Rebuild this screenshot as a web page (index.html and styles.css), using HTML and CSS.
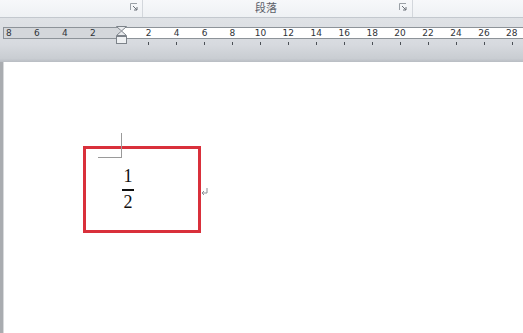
FILE: index.html
```html
<!DOCTYPE html>
<html lang="zh">
<head>
<meta charset="utf-8">
<link rel="stylesheet" href="styles.css">
</head>
<body>
<div class="app">
  <div class="ribbon">
    <div class="group g1">
      <span class="launcher"><svg width="8" height="8" viewBox="0 0 8 8"><path d="M0.5 7V0.5H7" fill="none" stroke="#9aa0a6"/><path d="M3 3L7 7M7 4V7H4" fill="none" stroke="#6b7178"/></svg></span>
    </div>
    <div class="group g2">
      <span class="glabel">段落</span>
      <span class="launcher"><svg width="8" height="8" viewBox="0 0 8 8"><path d="M0.5 7V0.5H7" fill="none" stroke="#9aa0a6"/><path d="M3 3L7 7M7 4V7H4" fill="none" stroke="#6b7178"/></svg></span>
    </div>
    <div class="group g3"></div>
  </div>
  <div class="rulerband">
    <div class="ruler">
      <div class="margin-l"></div>
      <div class="nums">
        <span>8</span><span>6</span><span>4</span><span>2</span><span></span>
        <span>2</span><span>4</span><span>6</span><span>8</span><span>10</span>
        <span>12</span><span>14</span><span>16</span><span>18</span><span>20</span>
        <span>22</span><span>24</span><span>26</span><span>28</span>
      </div>
    </div>
    <div class="ticks">
      <i></i><i></i><i></i><i></i><i></i><i></i><i></i><i></i><i></i><i></i><i></i><i></i><i></i><i></i>
    </div>
    <div class="indent">
      <svg width="11" height="19" viewBox="0 0 11 19"><path d="M0.5 0.5H10.5L5.5 5L10.5 9.5H0.5L5.5 5Z" fill="#e9ebee" stroke="#7d838a"/><rect x="0.5" y="10.5" width="10" height="7" fill="#eef0f2" stroke="#7d838a"/></svg>
    </div>
  </div>
  <div class="doc">
    <div class="frame-wrap">
      <div class="corner"></div>
      <div class="frame">
        <div class="frac">
          <span class="num">1</span>
          <span class="bar"></span>
          <span class="den">2</span>
        </div>
      </div>
      <span class="pilcrow"><svg width="7" height="8" viewBox="0 0 7 8"><path d="M6 0V5H1M3 3L1 5L3 7" fill="none" stroke="#8a8f95"/></svg></span>
    </div>
  </div>
</div>
</body>
</html>
```
FILE: styles.css
```css
* { box-sizing: border-box; }
html, body { margin: 0; padding: 0; }
body { width: 523px; height: 333px; overflow: hidden; background: #fff; font-family: "Liberation Sans", Arial, sans-serif; }
.app { width: 523px; height: 333px; display: flex; flex-direction: column; }

.ribbon { height: 18px; display: flex; background: linear-gradient(#f7f8fa, #eef1f4); border-bottom: 1px solid #c3c8ce; }
.group { position: relative; height: 17px; display: flex; align-items: center; border-right: 1px solid #d3d7dc; }
.g1 { width: 143px; justify-content: flex-end; padding-right: 4px; }
.g2 { width: 270px; justify-content: flex-end; padding-right: 5px; }
.g3 { flex: 1; border-right: none; }
.glabel { position: absolute; left: 112px; top: 0; font-family: "Noto Sans CJK SC", sans-serif; font-size: 11px; line-height: 15px; color: #5b6068; }
.launcher { display: flex; margin-top: -4px; }

.rulerband { position: relative; height: 44px; background: linear-gradient(#dfe2e6 0, #d7dadf 60%, #c9cdd2 92%, #b9bdc3 100%); }
.ruler { position: absolute; left: 3px; top: 9px; width: 520px; height: 12px; background: #fff; border-top: 1px solid #8d9399; border-bottom: 1px solid #8d9399; border-left: 1px solid #8d9399; overflow: hidden; }
.margin-l { position: absolute; left: 0; top: 0; width: 116px; height: 10px; background: #d4d7db; }
.nums { position: relative; display: flex; margin-left: -9px; }
.nums span { flex: 0 0 27.95px; text-align: center; font-family: "DejaVu Sans", sans-serif; font-size: 9px; line-height: 10px; color: #2f3338; }
.ticks { position: absolute; left: 135px; top: 24px; display: flex; }
.ticks i { flex: 0 0 27.95px; display: flex; justify-content: center; }
.ticks i::before { content: ""; width: 1px; height: 3px; background: #4b5056; }
.indent { position: absolute; left: 116px; top: 8px; }

.doc { flex: 1; border-left: 3px solid #a9acb0; box-shadow: inset 1px 0 0 #d8dadc; padding: 84px 0 0 80px; }
.frame-wrap { position: relative; width: 130px; }
.corner { position: absolute; left: 15px; top: -13px; width: 24px; height: 25px; border-right: 1px solid #9a9a9a; border-bottom: 1px solid #9a9a9a; }
.frame { width: 118px; height: 87px; border: 3px solid #d9303b; padding: 19px 0 0 36px; }
.frac { width: 12px; display: flex; flex-direction: column; align-items: center; font-family: "Liberation Serif", serif; font-size: 18px; color: #111; }
.num { line-height: 17px; height: 18px; }
.bar { width: 12px; height: 2px; background: #111; margin: 3px 0 3px; }
.den { line-height: 17px; }
.pilcrow { position: absolute; left: 118px; top: 42px; display: flex; }
```
